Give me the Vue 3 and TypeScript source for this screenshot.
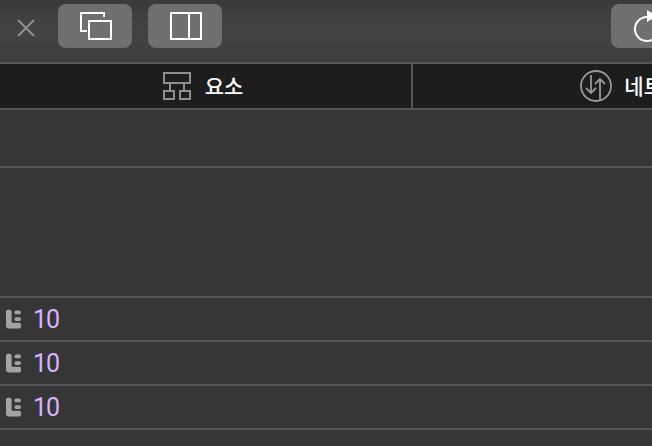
<template>
  <div class="inspector">
    <header class="toolbar">
      <svg class="close" width="18" height="18" viewBox="0 0 18 18">
        <path d="M1 1 L17 17 M17 1 L1 17" fill="none" stroke="#8e8e8e" stroke-width="2" />
      </svg>
      <button class="tool">
        <svg width="32" height="28" viewBox="0 0 32 28" fill="none" stroke="#fff" stroke-width="2">
          <path d="M7 19 H1 V1 H24 V5" />
          <rect x="9" y="9" width="22" height="18" />
        </svg>
      </button>
      <button class="tool">
        <svg width="32" height="28" viewBox="0 0 32 28" fill="none" stroke="#fff" stroke-width="2">
          <rect x="1" y="1" width="30" height="26" />
          <path d="M19 1 V27" />
        </svg>
      </button>
      <button class="tool tool-end">
        <svg width="32" height="32" viewBox="0 0 32 32" fill="none" stroke="#fff" stroke-width="2">
          <path d="M15 7 A12 12 0 1 0 27 19" />
          <path d="M15 0 L25 6 L15 12 Z" fill="#fff" stroke="none" />
        </svg>
      </button>
    </header>

    <nav class="tabs">
      <div v-for="tab in tabs" :key="tab.label" class="tab" :class="tab.cls">
        <svg v-if="tab.cls === 'elements'" width="28" height="28" viewBox="0 0 28 28" fill="none" stroke="#8f8f8f" stroke-width="2">
          <rect x="1" y="1" width="26" height="10" />
          <path d="M7 11 V19 M21 11 V19" />
          <rect x="1" y="19" width="10" height="8" />
          <rect x="17" y="19" width="10" height="8" />
        </svg>
        <svg v-else width="32" height="32" viewBox="0 0 32 32" fill="none" stroke="#999" stroke-width="1.800">
          <circle cx="16" cy="16" r="15" />
          <path d="M11 5 V23 M6 18 L11 23 L16 18" />
          <path d="M20 30 V9 M15 14 L20 9 L25 14" />
        </svg>
        <span class="tab-label">{{ tab.label }}</span>
      </div>
    </nav>

    <div class="row row-short"></div>
    <div class="row row-tall"></div>
    <div v-for="n in 3" :key="n" class="row row-value">
      <svg width="15" height="20" viewBox="0 0 16 20" fill="#a3a3a3">
        <path d="M0 2 Q0 0 2 0 H4 Q6 0 6 2 V13 Q6 14 7 14 H14 Q16 14 16 16 V18 Q16 20 14 20 H3 Q0 20 0 17 Z" />
        <rect x="9" y="1" width="7" height="4" rx="2" />
        <rect x="9" y="8" width="7" height="4" rx="2" />
      </svg>
      <span class="value">10</span>
    </div>
  </div>
</template>

<script setup lang="ts">
interface Tab {
  label: string;
  cls: string;
}

const tabs: Tab[] = [
  { label: '요소', cls: 'elements' },
  { label: '네트워크', cls: 'network' },
];
</script>

<style>
html,
body {
  margin: 0;
  overflow: hidden;
  background: #363636;
}
</style>

<style scoped>
.inspector {
  width: 652px;
  height: 446px;
  overflow: hidden;
  background: #363636;
  font-family: "Liberation Sans", "Noto Sans CJK KR", sans-serif;
}

.toolbar {
  display: flex;
  align-items: flex-start;
  box-sizing: border-box;
  height: 64px;
  padding: 4px 0 0 17px;
  background: linear-gradient(#3a3a3a, #444 50%, #3d3d3d);
  border-bottom: 2px solid #555;
}

.close {
  flex: none;
  margin: 15px 23px 0 0;
}

.tool {
  display: flex;
  flex: none;
  align-items: center;
  justify-content: center;
  box-sizing: border-box;
  width: 74px;
  height: 44px;
  margin-right: 16px;
  padding: 0 0 0 2px;
  border: 0;
  border-radius: 8px;
  background: #6f6f6f;
}

.tool-end {
  justify-content: flex-start;
  margin: 0 0 0 373px;
  padding-left: 21px;
}

.tabs {
  display: flex;
  height: 44px;
  margin-left: -5px;
  background: #1d1d1d;
  border-bottom: 2px solid #555;
}

.tab {
  display: flex;
  flex: none;
  align-items: center;
  justify-content: center;
  gap: 14px;
  box-sizing: border-box;
}

.elements {
  width: 418px;
  border-right: 2px solid #555;
}

.network {
  width: 456px;
  gap: 12px;
}

.tab-label {
  padding-bottom: 2px;
  color: #fff;
  font-family: "Noto Sans CJK KR", sans-serif;
  font-size: 21px;
  font-weight: 500;
}

.row {
  box-sizing: border-box;
  border-bottom: 2px solid #555;
}

.row-short {
  height: 58px;
}

.row-tall {
  height: 130px;
}

.row-value {
  display: flex;
  align-items: center;
  gap: 12px;
  height: 44px;
  padding-left: 6px;
}

.value {
  color: #d6b4ff;
  font-family: Roboto, sans-serif;
  font-size: 25px;
  letter-spacing: -1px;
}
</style>
